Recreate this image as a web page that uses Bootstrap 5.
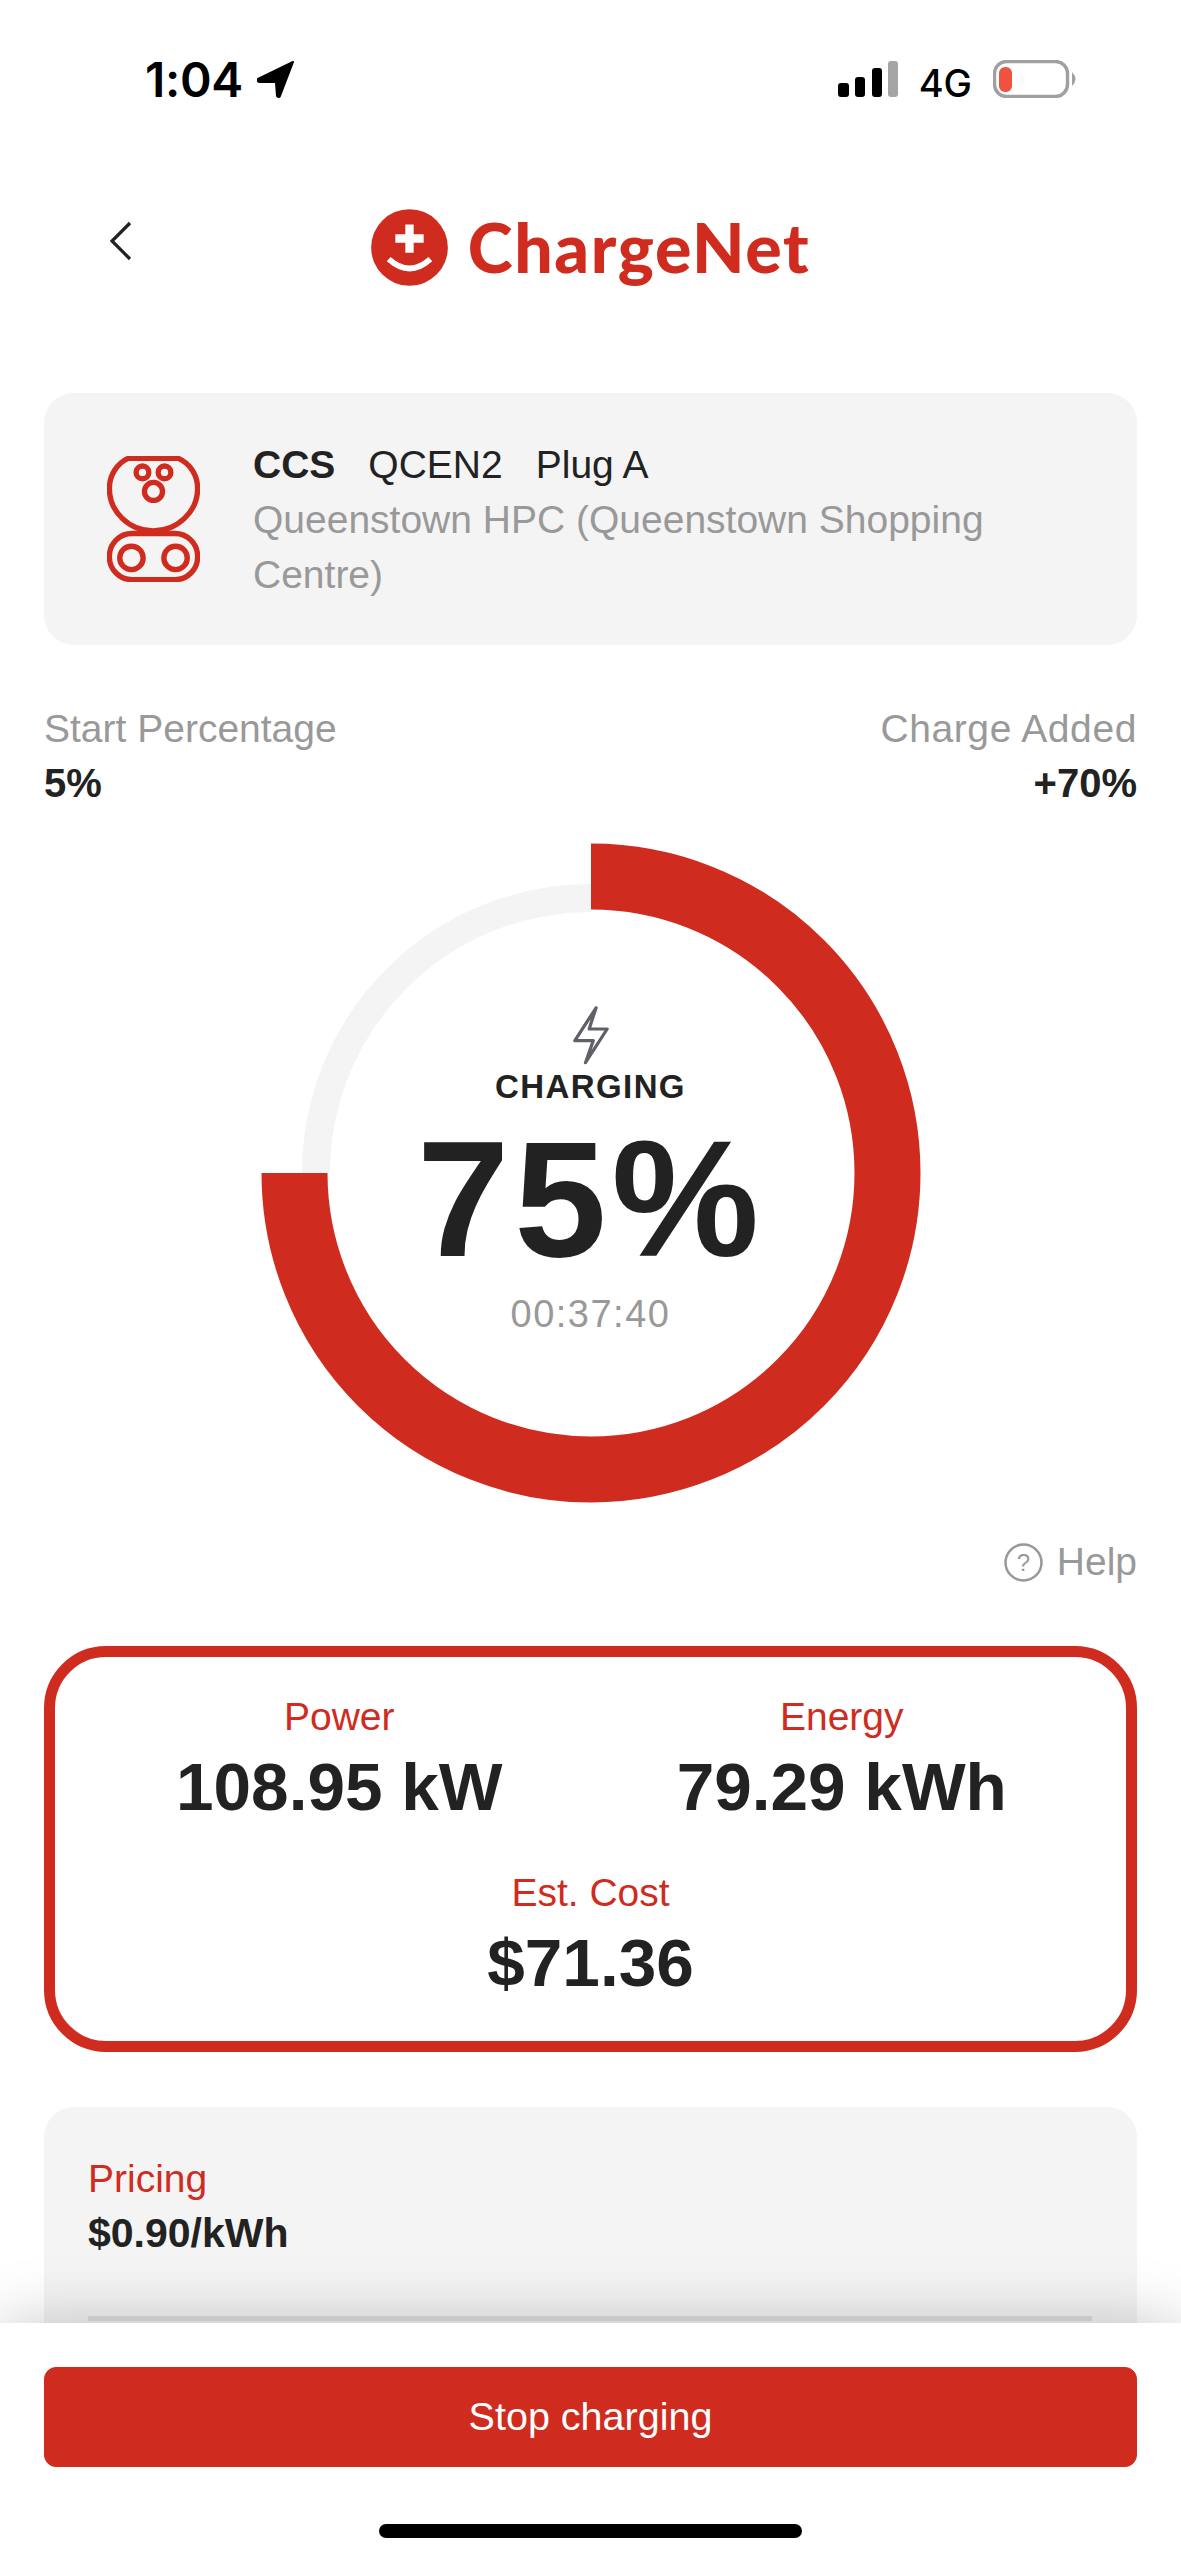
<!DOCTYPE html>
<html lang="en">

<head>
    <meta charset="UTF-8" />
    <meta name="viewport" content="width=device-width, initial-scale=1" />
    <title>ChargeNet - Charging</title>
    <link rel="stylesheet" href="https://cdn.jsdelivr.net/npm/bootstrap@5.3.2/dist/css/bootstrap.min.css">
    <style>
        body {
            font-family: 'Liberation Sans', Arial, sans-serif;
            background: #fff;
            color: #222;
            margin: 0;
        }

        .app-page {
            width: 1181px;
            height: 2560px;
            overflow: hidden;
            position: relative;
            background: #fff;
        }

        .status-strip {
            height: 120px;
            padding: 60px 103px 0 145px;
            color: #000;
        }

        .status-time {
            font-family: 'Inter', sans-serif;
            font-size: 48px;
            font-weight: 600;
            line-height: 40px;
            letter-spacing: -0.3px;
        }

        .status-net {
            font-family: 'Inter', sans-serif;
            font-size: 38px;
            font-weight: 500;
            line-height: 38px;
        }

        .status-right {
            gap: 21px;
        }

        .status-left {
            gap: 14px;
        }

        .top-head {
            height: 132px;
            margin-top: 61px;
            position: relative;
        }

        .back-link {
            position: absolute;
            left: 108px;
            top: 40px;
        }

        .logo-lockup {
            gap: 20px;
        }

        .logo-word {
            font-family: 'Lato', sans-serif;
            font-weight: 900;
            font-size: 68px;
            line-height: 76px;
            letter-spacing: 1.6px;
            color: #cf2c1f;
        }

        .side-gutter {
            padding-left: 44px;
            padding-right: 44px;
        }

        .plug-panel {
            margin-top: 80px;
            height: 252px;
            background: #f4f4f4;
            border-radius: 30px;
            padding-left: 63px;
            padding-right: 60px;
            gap: 53px;
        }

        .plug-text {
            font-size: 39px;
            line-height: 55px;
        }

        .plug-title span {
            margin-right: 33px;
        }

        .muted-text {
            color: #999;
        }

        .stat-row {
            margin-top: 56px;
            font-size: 39px;
            line-height: 55px;
        }

        .stat-value {
            font-size: 40px;
            font-weight: 700;
        }

        .added-label {
            letter-spacing: 0.6px;
        }

        .ring-wrap {
            width: 660px;
            height: 660px;
            margin: 32px auto 0;
            position: relative;
        }

        .ring-center {
            position: absolute;
            inset: 0;
            padding-top: 162px;
        }

        .state-label {
            font-size: 33px;
            font-weight: 700;
            letter-spacing: 1.4px;
            line-height: 40px;
            margin-top: 2px;
        }

        .percent-big {
            font-size: 166px;
            font-weight: 700;
            line-height: 120px;
            letter-spacing: 5px;
            margin-top: 32px;
        }

        .elapsed-time {
            font-size: 38px;
            line-height: 44px;
            letter-spacing: 1.5px;
            margin-top: 33px;
            color: #999;
        }

        .help-row {
            margin-top: 32px;
            height: 55px;
            font-size: 39px;
            gap: 14px;
        }

        .readout-box {
            margin-top: 56px;
            height: 406px;
            border: 11px solid #cf2c1f;
            border-radius: 62px;
            padding: 35px 33px 0;
        }

        .red-label {
            color: #cf2c1f;
            font-size: 39px;
            line-height: 50px;
        }

        .readout-value {
            font-size: 67.5px;
            font-weight: 700;
            line-height: 70px;
            margin-top: 10px;
        }

        .readout-lower {
            margin-top: 46px;
        }

        .pricing-panel {
            margin-top: 55px;
            height: 400px;
            background: #f4f4f4;
            border-radius: 30px;
            padding: 44px 45px 0 44px;
        }

        .pricing-panel .red-label {
            line-height: 55px;
        }

        .pricing-value {
            font-size: 41px;
            font-weight: 700;
            line-height: 55px;
        }

        .panel-rule {
            height: 5px;
            background: #dedede;
            margin-top: 55px;
        }

        .bottom-sheet {
            position: absolute;
            left: 0;
            right: 0;
            top: 2323px;
            bottom: 0;
            background: #fff;
            padding-top: 44px;
            box-shadow: 0 0 60px rgba(0, 0, 0, 0.22);
        }

        .btn-stop {
            height: 100px;
            background: #cf2c1f;
            border-color: #cf2c1f;
            color: #fff;
            font-size: 39.5px;
            border-radius: 12px;
        }

        .home-bar {
            width: 423px;
            height: 14px;
            background: #000;
            border-radius: 7px;
            margin: 57px auto 0;
        }
    </style>
</head>

<body>
    <div class="app-page">

        <div class="status-strip d-flex justify-content-between">
            <div class="status-left d-flex align-items-start">
                <span class="status-time">1:04</span>
                <svg width="38" height="38" viewBox="0 0 38 38" class="d-block">
                    <path d="M36 2 L1 19 Q0 22 3 22 L18 22 Q19 22 19 23 L20 36 Q22 38 23 36 Z" fill="#000" stroke="#000" stroke-width="2" stroke-linejoin="round" />
                </svg>
            </div>
            <div class="status-right d-flex align-items-start">
                <svg width="60" height="38" viewBox="0 0 60 38" class="d-block">
                    <rect x="0" y="23" width="11" height="14" rx="3" fill="#000" />
                    <rect x="17" y="17" width="10" height="20" rx="3" fill="#000" />
                    <rect x="34" y="8" width="10" height="29" rx="3" fill="#000" />
                    <rect x="50" y="1" width="10" height="36" rx="3" fill="#a5a5a5" />
                </svg>
                <span class="status-net mt-1">4G</span>
                <svg width="85" height="38" viewBox="0 0 85 38" class="d-block">
                    <rect x="1.5" y="1.5" width="73" height="35" rx="12" fill="#fff" stroke="#a0a0a0" stroke-width="3.4" />
                    <rect x="6" y="7" width="13" height="25" rx="6" fill="#ef5340" />
                    <path d="M79 12 Q86 19 79 26 Z" fill="#a0a0a0" />
                </svg>
            </div>
        </div>

        <div class="top-head d-flex justify-content-center align-items-center">
            <a href="#" class="back-link">
                <svg width="26" height="40" viewBox="0 0 26 40" class="d-block">
                    <path d="M22 2 L4 20 L22 38" fill="none" stroke="#222" stroke-width="3.2" />
                </svg>
            </a>
            <div class="logo-lockup d-flex align-items-center">
                <svg width="77" height="77" viewBox="62 57 231 230" class="d-block">
                    <circle cx="177.5" cy="172" r="115" fill="#cf2c1f" />
                    <path d="M165 103 H190 V132 H220 V158 H190 V188 H165 V158 H135 V132 H165 Z" fill="#fff" />
                    <path d="M115 207 Q178 263 240 207" fill="none" stroke="#fff" stroke-width="17" />
                </svg>
                <span class="logo-word">ChargeNet</span>
            </div>
        </div>

        <div class="side-gutter">
            <div class="plug-panel d-flex align-items-center">
                <svg width="93" height="126" viewBox="52 78 278 377" class="d-block flex-shrink-0">
                    <g fill="none" stroke="#cf2c1f" stroke-width="16">
                        <path d="M115 85 H265 C300 100 323 135 323 175 C323 245 262 302 190 302 C118 302 59 245 59 175 C59 135 82 100 115 85 Z" />
                        <rect x="59" y="310" width="264" height="138" rx="68" />
                        <circle cx="158" cy="127" r="19" />
                        <circle cx="224" cy="127" r="19" />
                        <circle cx="191" cy="184" r="27" />
                        <circle cx="125" cy="383" r="35" />
                        <circle cx="257" cy="383" r="35" />
                    </g>
                </svg>
                <div class="plug-text">
                    <div class="plug-title"><span class="fw-bold">CCS</span><span>QCEN2</span><span>Plug A</span></div>
                    <div class="muted-text">Queenstown HPC (Queenstown Shopping Centre)</div>
                </div>
            </div>

            <div class="stat-row d-flex justify-content-between">
                <div>
                    <div class="muted-text">Start Percentage</div>
                    <div class="stat-value">5%</div>
                </div>
                <div class="text-end">
                    <div class="muted-text added-label">Charge Added</div>
                    <div class="stat-value">+70%</div>
                </div>
            </div>

            <div class="ring-wrap">
                <svg width="660" height="660" viewBox="0 0 660 660" class="d-block">
                    <path d="M330 55 A275 275 0 0 0 55 330" fill="none" stroke="#f4f4f4" stroke-width="28" />
                    <path d="M330 33.5 A296.5 296.5 0 1 1 33.5 330" fill="none" stroke="#cf2c1f" stroke-width="66" />
                </svg>
                <div class="ring-center text-center">
                    <svg width="36" height="60" viewBox="768 412 78 128" class="d-block mx-auto">
                        <path d="M818 417 L772 488 H812 L795 536 L842 463 H803 Z" fill="none" stroke="#5f6068" stroke-width="7" stroke-linejoin="round" />
                    </svg>
                    <div class="state-label">CHARGING</div>
                    <div class="percent-big">75%</div>
                    <div class="elapsed-time">00:37:40</div>
                </div>
            </div>

            <div class="help-row d-flex justify-content-end align-items-center muted-text">
                <svg width="39" height="39" viewBox="0 0 39 39" class="d-block">
                    <circle cx="19.5" cy="19.5" r="18" fill="none" stroke="#999" stroke-width="2.5" />
                    <text x="19.5" y="28" text-anchor="middle" font-size="24" fill="#999">?</text>
                </svg>
                <span>Help</span>
            </div>

            <div class="readout-box text-center">
                <div class="row g-0">
                    <div class="col-6">
                        <div class="red-label">Power</div>
                        <div class="readout-value">108.95 kW</div>
                    </div>
                    <div class="col-6">
                        <div class="red-label">Energy</div>
                        <div class="readout-value">79.29 kWh</div>
                    </div>
                </div>
                <div class="readout-lower">
                    <div class="red-label">Est. Cost</div>
                    <div class="readout-value">$71.36</div>
                </div>
            </div>

            <div class="pricing-panel">
                <div class="red-label">Pricing</div>
                <div class="pricing-value">$0.90/kWh</div>
                <div class="panel-rule"></div>
            </div>
        </div>

        <div class="bottom-sheet">
            <div class="side-gutter">
                <button type="button" class="btn btn-stop w-100">Stop charging</button>
            </div>
            <div class="home-bar"></div>
        </div>
    </div>

    <script src="https://cdn.jsdelivr.net/npm/bootstrap@5.3.2/dist/js/bootstrap.bundle.min.js"></script>
</body>

</html>
